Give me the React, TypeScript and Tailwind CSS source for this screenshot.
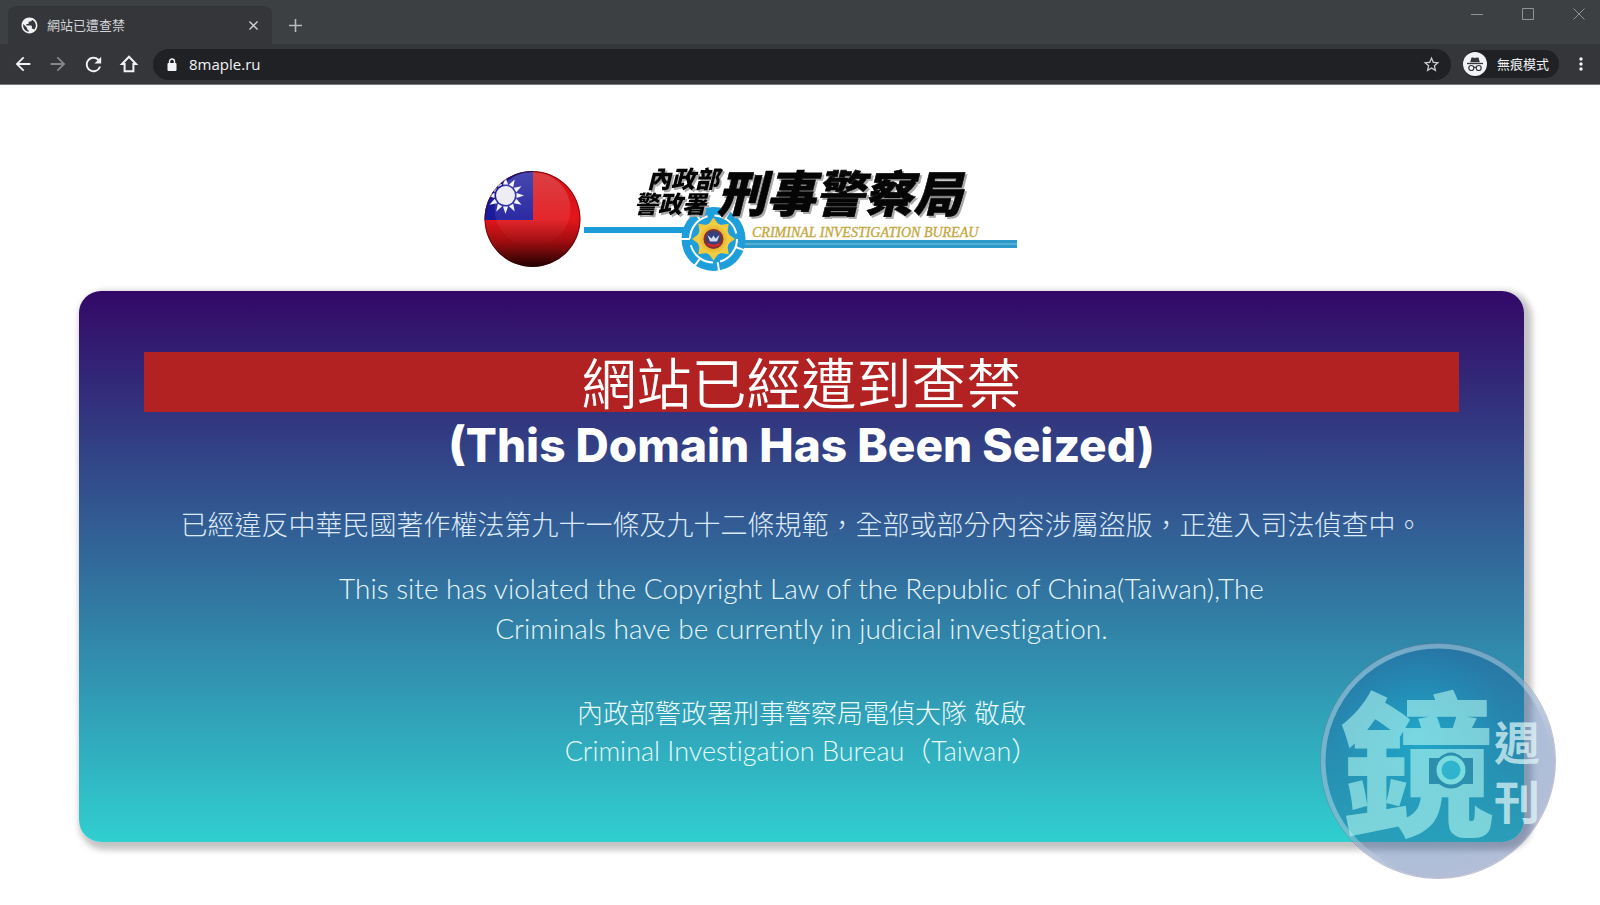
import { MdArrowBack, MdArrowForward, MdRefresh, MdPublic, MdStarBorder, MdMoreVert } from "react-icons/md";

const cjk = "font-['Noto_Sans_CJK_TC',sans-serif]";

function Incognito() {
  return (
    <svg viewBox="0 0 24 24" className="size-6 shrink-0" aria-hidden="true">
      <circle cx="12" cy="12" r="12" fill="#f1f3f4" />
      <path d="M8.500 5.500h1.600c1.200.5 2.600.5 3.800 0h1.600l1.300 4.700H7.200z" fill="#35363a" />
      <path d="M4 11.500h16" stroke="#35363a" strokeWidth="1.300" />
      <g fill="none" stroke="#35363a" strokeWidth="1.200">
        <circle cx="8.300" cy="16" r="2.500" />
        <circle cx="15.700" cy="16" r="2.500" />
        <path d="M10.800 15.600c.8-.5 1.600-.5 2.400 0" />
      </g>
    </svg>
  );
}

function Browser() {
  return (
    <header className="bg-[#3c4043] text-[#f1f3f4]">
      <div className="flex h-11 items-end">
        <div className="ml-2 flex h-[38px] w-[264px] items-center rounded-t-lg bg-[#35363a] pl-3 pr-3">
          <MdPublic size={19} className="shrink-0" />
          <span className={`ml-2 flex-1 text-[13px] text-[#d2d4d7] ${cjk}`}>網站已遭查禁</span>
          <button aria-label="關閉分頁" className="p-0.5">
            <svg viewBox="0 0 10 10" className="size-[9px]"><path d="M.5.5l9 9M9.500.5l-9 9" stroke="#d2d4d7" strokeWidth="1.500" /></svg>
          </button>
        </div>
        <button aria-label="新分頁" className="mb-2.5 ml-[15px] p-0.5">
          <svg viewBox="0 0 13 13" className="size-[13px]"><path d="M6.500 0v13M0 6.500h13" stroke="#b8babd" strokeWidth="1.600" /></svg>
        </button>
        <div className="mb-6 ml-auto flex items-center gap-[39px] pr-[15px] text-[#909294]">
          <button aria-label="最小化"><svg viewBox="0 0 12 12" className="size-3"><path d="M0 6.500h12" stroke="currentColor" /></svg></button>
          <button aria-label="最大化"><svg viewBox="0 0 12 12" className="size-3"><path d="M.5.5h11v11H.5z" fill="none" stroke="currentColor" /></svg></button>
          <button aria-label="關閉"><svg viewBox="0 0 12 12" className="size-3"><path d="M.5.5l11 11M11.500.5l-11 11" stroke="currentColor" /></svg></button>
        </div>
      </div>
      <div className="flex h-[41px] items-center border-b border-[#77787a] bg-[#35363a] pl-3">
        <nav className="flex items-center gap-[13px]">
          <button aria-label="上一頁"><MdArrowBack size={22} /></button>
          <button aria-label="下一頁" className="text-[#85878a]"><MdArrowForward size={22} /></button>
          <button aria-label="重新載入"><MdRefresh size={23} /></button>
          <button aria-label="首頁">
            <svg viewBox="0 0 22 22" className="size-[22px]"><path d="M11 3.700L4 11h2.600v7.200h8.800V11H18z" fill="none" stroke="currentColor" strokeWidth="2" /></svg>
          </button>
        </nav>
        <div className="ml-[13px] flex h-[31px] flex-1 items-center rounded-full bg-[#202124] pl-3.5 pr-2.5">
          <svg viewBox="0 0 10 13" className="h-[13px] w-2.5" aria-hidden="true">
            <path d="M2.500 6V3.500a2.500 2.500 0 0 1 5 0V6" fill="none" stroke="currentColor" strokeWidth="1.400" />
            <rect x=".5" y="5" width="9" height="8" rx="1" fill="currentColor" />
          </svg>
          <input aria-label="網址" defaultValue="8maple.ru" className="ml-3 min-w-0 flex-1 bg-transparent font-['Open_Sans',sans-serif] text-[15px] outline-none" />
          <button aria-label="加入書籤" className="text-[#c9cbce]"><MdStarBorder size={19} /></button>
        </div>
        <button className={`ml-3 flex h-[28px] items-center gap-2.5 rounded-full bg-[#202124] pr-2.5 text-[13px] ${cjk}`}>
          <Incognito />
          無痕模式
        </button>
        <button aria-label="選單" className="ml-3 mr-[9px]"><MdMoreVert size={20} /></button>
      </div>
    </header>
  );
}

function BureauLogo() {
  const rays = Array.from({ length: 12 }, (_, i) => i * 30);
  const ticks = [20, 80, 125, 180, 235, 300];
  return (
    <svg viewBox="482 160 640 120" className="h-[120px] w-[640px] max-w-full overflow-visible" role="img" aria-label="內政部警政署刑事警察局">
      <defs>
        <linearGradient id="red" x1="0" y1="0" x2="0" y2="1">
          <stop offset="0" stopColor="#d01015" />
          <stop offset=".5" stopColor="#e3161b" />
          <stop offset=".72" stopColor="#a30d10" />
          <stop offset="1" stopColor="#1c0000" />
        </linearGradient>
        <linearGradient id="shine" x1="0" y1="0" x2="0" y2="1">
          <stop offset="0" stopColor="#fff" stopOpacity=".2" />
          <stop offset="1" stopColor="#fff" stopOpacity="0" />
        </linearGradient>
        <radialGradient id="gold">
          <stop offset=".4" stopColor="#e2a323" />
          <stop offset="1" stopColor="#f4d348" />
        </radialGradient>
        <clipPath id="ball"><circle cx="532.500" cy="219" r="48" /></clipPath>
      </defs>
      <g clipPath="url(#ball)">
        <rect x="484" y="170" width="97" height="98" fill="url(#red)" />
        <rect x="484" y="170" width="49" height="50" fill="#1b1a9c" />
        {rays.map((a) => (
          <path key={a} d="M503 184.500L505.500 177l2.500 7.500z" fill="#f4f4fb" transform={`rotate(${a} 505.500 195.500)`} />
        ))}
        <circle cx="505.500" cy="195.500" r="9.500" fill="#eceaf2" />
        <ellipse cx="532.500" cy="209" rx="38" ry="37" fill="url(#shine)" />
      </g>
      <circle cx="532.500" cy="219" r="47.500" fill="none" stroke="#300" strokeOpacity=".5" />
      <path d="M584 230h100" stroke="#1b9bd8" strokeWidth="6" />
      <path d="M744 244h273" stroke="#2e9aca" strokeWidth="8" />
      <path d="M744 244h273" stroke="#7bc6e2" strokeWidth="1" />
      <circle cx="713.500" cy="239" r="32" fill="#1e9fdb" />
      <circle cx="713.500" cy="239" r="23.500" fill="none" stroke="#fff" strokeWidth="2" strokeDasharray="30 7" />
      {ticks.map((a) => (
        <path key={a} d="M737 239h9" stroke="#fff" strokeWidth="2" transform={`rotate(${a} 713.500 239)`} />
      ))}
      {[0, 45, 90, 135, 180, 225, 270, 315].map((a) => (
        <path key={a} d="M706.500 227l7-9.500 7 9.500z" fill="#f0c93c" transform={`rotate(${a} 713.500 239)`} />
      ))}
      <circle cx="713.500" cy="239" r="16" fill="url(#gold)" />
      <circle cx="713.500" cy="239" r="10" fill="#7d3137" />
      <circle cx="713.500" cy="238" r="7" fill="#33427e" />
      <path d="M707.500 235l4 3.500 2-3 2 3 4-3.500-2.500 6.500h-7z" fill="#d5dcee" />
      <path d="M707.500 244q6 3.500 12 0" stroke="#d02a2a" strokeWidth="2.500" fill="none" />
      <g className="drop-shadow-[2px_2px_0px_#a9a9a9]" fontFamily="'Noto Sans CJK TC', sans-serif" fontWeight="900" fontStyle="italic" fill="#050505">
        <text x="647" y="188" fontSize="24">內政部</text>
        <text x="634" y="213" fontSize="24">警政署</text>
        <text x="717" y="212" fontSize="49" stroke="#050505" strokeWidth=".6">刑事警察局</text>
      </g>
      <text x="752" y="237" fontFamily="'Liberation Sans Narrow', 'Liberation Serif', serif" fontStyle="italic" fontSize="14" fill="#c5a63a" stroke="#c5a63a" strokeWidth=".3">CRIMINAL INVESTIGATION BUREAU</text>
    </svg>
  );
}

function Watermark() {
  return (
    <svg viewBox="0 0 236 236" className="absolute -bottom-[37px] -right-8 size-[236px]" role="img" aria-label="鏡週刊">
      <defs>
        <radialGradient id="disc" cx=".42" cy=".38" r=".62">
          <stop offset="0" stopColor="#0aa3d8" stopOpacity=".45" />
          <stop offset=".6" stopColor="#17579b" stopOpacity=".38" />
          <stop offset="1" stopColor="#1f3f8a" stopOpacity=".34" />
        </radialGradient>
        <linearGradient id="rim" x1="0" y1="0" x2=".8" y2="1">
          <stop offset="0" stopColor="#d9eef5" stopOpacity=".45" />
          <stop offset=".55" stopColor="#d9eef5" stopOpacity=".4" />
          <stop offset=".75" stopColor="#d9eef5" stopOpacity="0" />
        </linearGradient>
      </defs>
      <circle cx="118" cy="118" r="117" fill="url(#disc)" />
      <circle cx="118" cy="118" r="115" fill="none" stroke="url(#rim)" strokeWidth="5" />
      <circle cx="118" cy="118" r="117.500" fill="none" stroke="#61608a" strokeOpacity=".4" />
      <text x="20" y="181" fontFamily="'Noto Sans CJK TC', sans-serif" fontWeight="900" fontSize="154" fill="#b9fbf3" fillOpacity=".58">鏡</text>
      <g fontFamily="'Noto Sans CJK TC', sans-serif" fontWeight="700" fontSize="46" fill="#e6fbfb" fillOpacity=".7">
        <text x="174" y="117">週</text>
        <text x="174" y="176">刊</text>
      </g>
      <path d="M109 115h10q12-11 24 0h10v26h-10q-12 9-24 0h-10z" fill="#2d8fae" />
      <circle cx="131" cy="127" r="12" fill="#30b4cd" stroke="#7bdcdf" strokeWidth="5" />
    </svg>
  );
}

export default function App() {
  return (
    <div className="min-h-screen bg-white">
      <Browser />
      <main className="pb-16 pl-[79px] pr-[76px] pt-[75px]">
        <div className="flex justify-center"><BureauLogo /></div>
        <section className="relative mt-[11px] min-h-[551px] rounded-[22px] bg-linear-to-b/srgb from-[#330867] to-[#30cfd0] px-[65px] pb-[67px] pt-[61px] text-center text-white shadow-[4px_4px_6px_4px_#c4c4c4]">
          <h1 className={`bg-[#b22222] pb-1 text-[55px] font-[350] leading-[56px] ${cjk}`}>網站已經遭到查禁</h1>
          <h2 className="font-['Inter',sans-serif] text-[46px] font-extrabold leading-[66px]">(This Domain Has Been Seized)</h2>
          <p className={`mt-[26px] text-[27px] font-light leading-10 text-[#dceaf8] ${cjk}`}>已經違反中華民國著作權法第九十一條及九十二條規範，全部或部分內容涉屬盜版，正進入司法偵查中。</p>
          <p className="mx-auto mt-6 max-w-[960px] font-['Lato',sans-serif] text-[28px] font-light leading-10 text-[#e8f6fd] [font-variant-ligatures:none]">
            This site has violated the Copyright Law of the Republic of China(Taiwan),The<br />
            Criminals have be currently in judicial investigation.
          </p>
          <div className="mt-[46px] font-['Lato','Noto_Sans_CJK_TC',sans-serif] font-light leading-[38px] text-[#e8fafc] [font-variant-ligatures:none]">
            <p className="text-[26px]">內政部警政署刑事警察局電偵大隊 敬啟</p>
            <p className="text-[27px]">Criminal Investigation Bureau（Taiwan）</p>
          </div>
          <Watermark />
        </section>
      </main>
    </div>
  );
}
